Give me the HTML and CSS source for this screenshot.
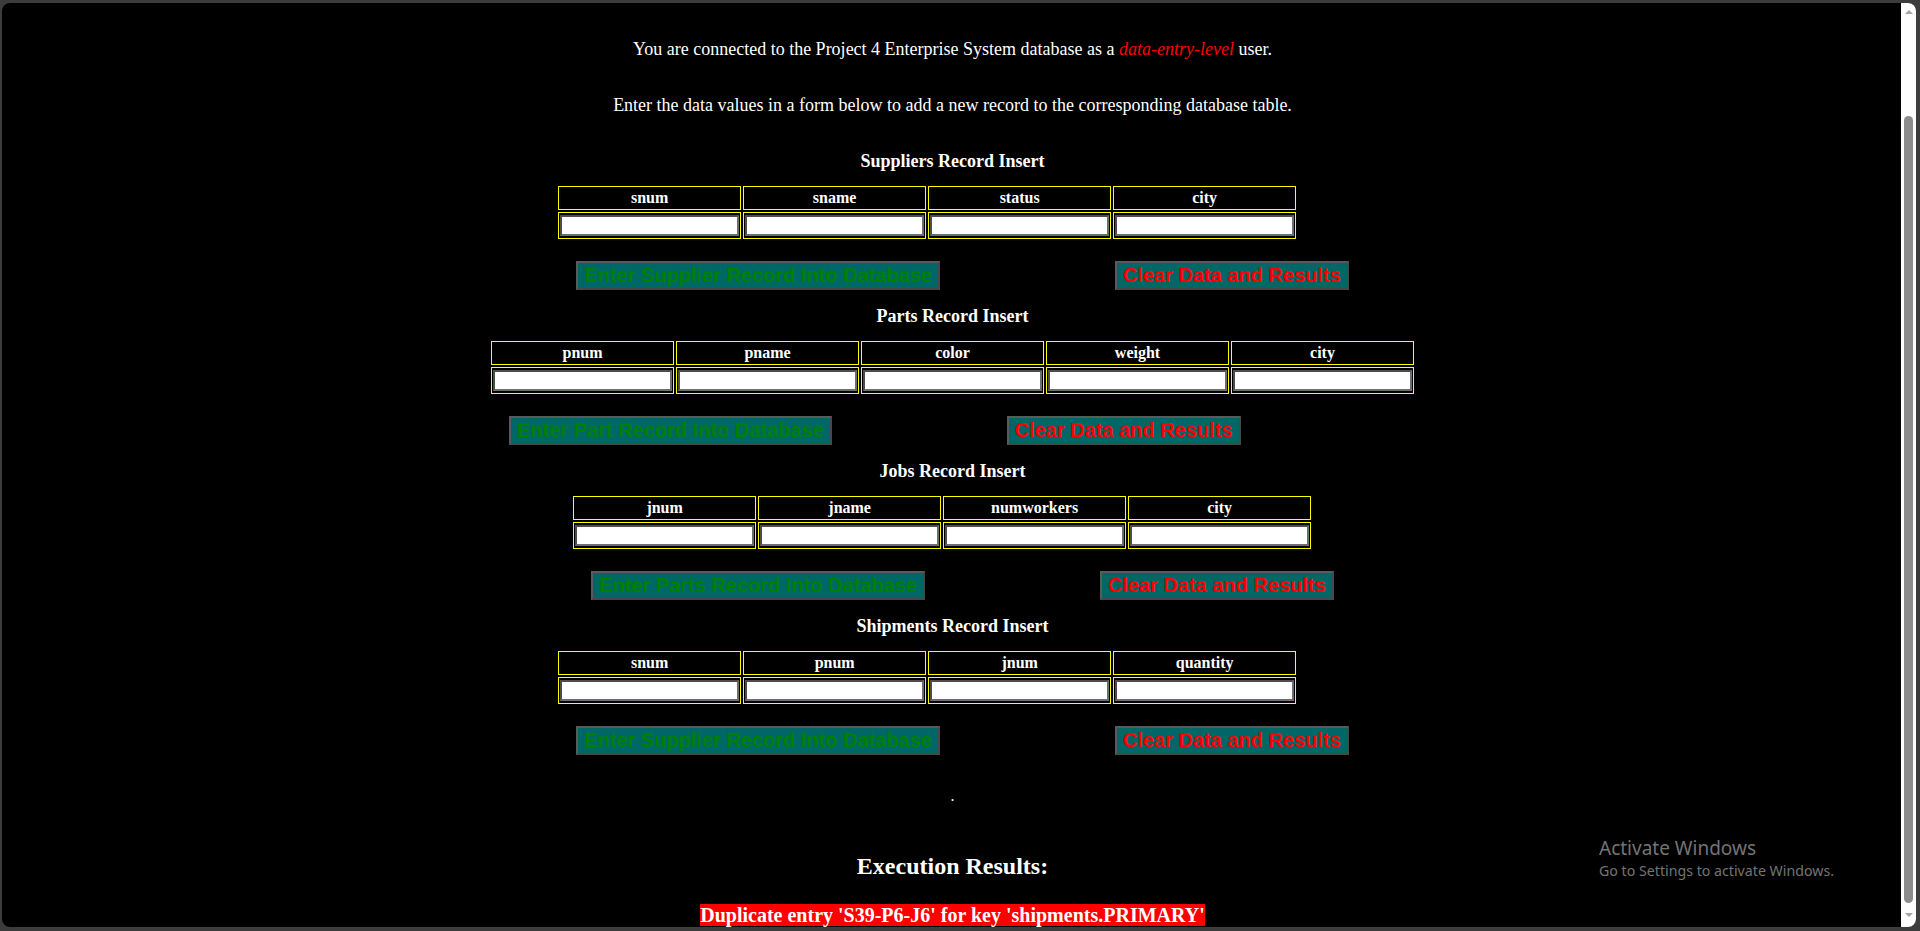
FILE: index.html
```html
<!DOCTYPE html>
<html>
<head>
<meta charset="utf-8">
<title>Project 4 Enterprise System - Data Entry</title>
<link rel="stylesheet" href="styles.css">
</head>
<body>
<div class="window">
  <main class="page">
    <p class="intro">You are connected to the Project 4 Enterprise System database as a <em class="role">data-entry-level</em> user.</p>
    <p class="intro intro-second">Enter the data values in a form below to add a new record to the corresponding database table.</p>

    <section class="block">
      <h4 class="block-title">Suppliers Record Insert</h4>
      <form class="block-body">
        <table class="fields">
          <tr><th>snum</th><th>sname</th><th>status</th><th>city</th></tr>
          <tr><td><input type="text"></td><td><input type="text"></td><td><input type="text"></td><td><input type="text"></td></tr>
        </table>
        <div class="actions">
          <button type="button" class="btn btn-submit">Enter Supplier Record Into Database</button>
          <button type="button" class="btn btn-clear">Clear Data and Results</button>
        </div>
      </form>
    </section>

    <section class="block">
      <h4 class="block-title">Parts Record Insert</h4>
      <form class="block-body">
        <table class="fields">
          <tr><th>pnum</th><th>pname</th><th>color</th><th>weight</th><th>city</th></tr>
          <tr><td><input type="text"></td><td><input type="text"></td><td><input type="text"></td><td><input type="text"></td><td><input type="text"></td></tr>
        </table>
        <div class="actions">
          <button type="button" class="btn btn-submit">Enter Part Record Into Database</button>
          <button type="button" class="btn btn-clear">Clear Data and Results</button>
        </div>
      </form>
    </section>

    <section class="block">
      <h4 class="block-title">Jobs Record Insert</h4>
      <form class="block-body">
        <table class="fields">
          <tr><th>jnum</th><th>jname</th><th>numworkers</th><th>city</th></tr>
          <tr><td><input type="text"></td><td><input type="text"></td><td><input type="text"></td><td><input type="text"></td></tr>
        </table>
        <div class="actions">
          <button type="button" class="btn btn-submit">Enter Parts Record Into Database</button>
          <button type="button" class="btn btn-clear">Clear Data and Results</button>
        </div>
      </form>
    </section>

    <section class="block">
      <h4 class="block-title">Shipments Record Insert</h4>
      <form class="block-body">
        <table class="fields">
          <tr><th>snum</th><th>pnum</th><th>jnum</th><th>quantity</th></tr>
          <tr><td><input type="text"></td><td><input type="text"></td><td><input type="text"></td><td><input type="text"></td></tr>
        </table>
        <div class="actions">
          <button type="button" class="btn btn-submit">Enter Supplier Record Into Database</button>
          <button type="button" class="btn btn-clear">Clear Data and Results</button>
        </div>
      </form>
    </section>

    <div class="dot">.</div>
    <h2 class="results-title">Execution Results:</h2>
    <div class="results"><span class="error">Duplicate entry 'S39-P6-J6' for key 'shipments.PRIMARY'</span></div>
  </main>

  <div class="scrollbar">
    <div class="sb-arrow sb-up"></div>
    <div class="sb-thumb"></div>
    <div class="sb-arrow sb-down"></div>
  </div>

  <div class="watermark">
    <div class="wm-title">Activate Windows</div>
    <div class="wm-sub">Go to Settings to activate Windows.</div>
  </div>
</div>
</body>
</html>
```

FILE: styles.css
```css
* { box-sizing: border-box; }

html, body {
  margin: 0;
  height: 100%;
}

body {
  background: #3c3c3c;
  padding: 3px 4px 4px 2px;
  overflow: hidden;
}

.window {
  position: relative;
  display: flex;
  height: 924px;
  background: #000;
  border-radius: 8px;
  overflow: hidden;
}

.page {
  flex: 1;
  min-width: 0;
  padding-top: 36px;
  padding-left: 2px;
  text-align: center;
  color: #fff;
  font-family: "Liberation Serif", "Times New Roman", serif;
  overflow: hidden;
}

.intro {
  margin: 0;
  font-size: 18px;
  line-height: 20px;
}

.intro-second { margin-top: 36px; }

.role {
  color: #ff0000;
  font-style: italic;
}

.block { margin-top: 35px; }
.block + .block { margin-top: 15px; }

.block-title {
  margin: 0 0 13px;
  padding-top: 1px;
  font-size: 18px;
  line-height: 20px;
  font-weight: bold;
}

.block-body {
  width: fit-content;
  margin: 0 auto;
  text-align: left;
}

.fields {
  border-collapse: separate;
  border-spacing: 2px;
}

.fields th,
.fields td {
  width: 183px;
  border: 1px solid #ffff00;
}

.fields th {
  height: 24px;
  padding: 1px;
  font-size: 16px;
  line-height: 20px;
  font-weight: bold;
  text-align: center;
  color: #fff;
}

.fields td {
  height: 27px;
  padding: 2px 1px;
}

.fields input {
  display: block;
  width: 100%;
  height: 21px;
  margin: 0;
  padding: 0 2px;
  border: 2px solid;
  border-color: #4d4d4d #6e6e6e #6e6e6e #4d4d4d;
  background: #fff;
}

.actions {
  display: flex;
  gap: 175px;
  padding-left: 20px;
  margin-top: 20px;
}

.btn {
  margin: 0;
  padding: 1px 6px;
  font-family: "Liberation Sans", Arial, sans-serif;
  font-size: 20px;
  font-weight: bold;
  line-height: 23px;
  background: #006666;
  border: 2px solid;
  border-color: #5a5a5a #474747 #474747 #5a5a5a;
  white-space: nowrap;
}

.btn-submit { color: #008000; }
.btn-clear { color: #ff0000; }

.dot {
  margin-top: 32px;
  font-size: 16px;
  line-height: 18px;
}

.results-title {
  margin: 47px 0 0;
  font-size: 24px;
  line-height: 28px;
  font-weight: bold;
}

.results {
  margin-top: 24px;
  font-size: 20px;
  line-height: 23px;
  font-weight: bold;
}

.error {
  background: #ff0000;
  color: #fff;
}

.scrollbar {
  flex: 0 0 15px;
  background: #fdfdfd;
  display: flex;
  flex-direction: column;
  align-items: center;
}

.sb-arrow {
  width: 0;
  height: 0;
  border-left: 4px solid transparent;
  border-right: 4px solid transparent;
}

.sb-up {
  margin-top: 7px;
  border-bottom: 4px solid #a3a3a3;
}

.sb-thumb {
  margin-top: 102px;
  width: 9px;
  height: 787px;
  border-radius: 5px;
  background: #8c8c8c;
}

.sb-down {
  margin-top: 10px;
  border-top: 4px solid #a3a3a3;
}

.watermark {
  position: absolute;
  left: 1597px;
  top: 832px;
  color: #747474;
  font-family: "Noto Sans", sans-serif;
  pointer-events: none;
}

.wm-title {
  font-size: 19px;
  line-height: 26px;
}

.wm-sub {
  font-size: 14.2px;
  line-height: 20px;
}
```
